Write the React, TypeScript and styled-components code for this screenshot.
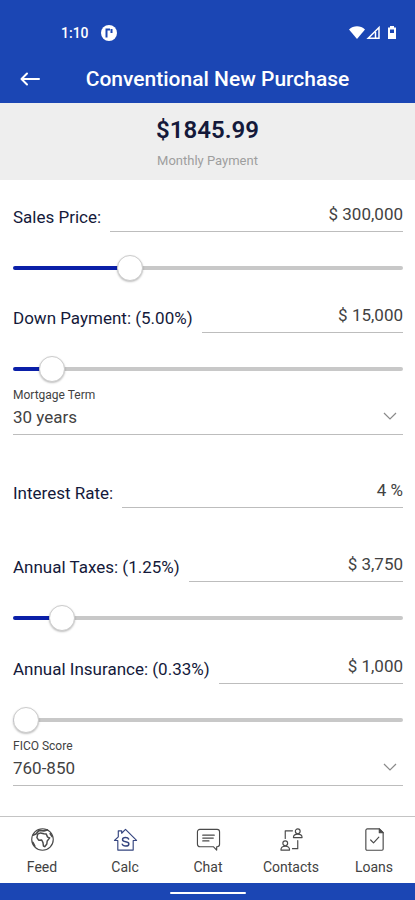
import React, { useId, useState } from "react";
import styled, { createGlobalStyle } from "styled-components";

const color = {
  brand: "#1b46b4",
  fill: "#0a1fa8",
  track: "#c8c8c8",
  line: "#bdbdbd",
  navy: "#14193a",
  text: "#424242",
  muted: "#9e9e9e",
};

const GlobalStyle = createGlobalStyle`
  *, *::before, *::after { box-sizing: border-box; }
  body {
    margin: 0;
    background: #fff;
    font-family: Roboto, "Liberation Sans", sans-serif;
  }
  button, input, select { font-family: inherit; }
`;

const Screen = styled.div`
  display: flex;
  flex-direction: column;
  min-height: 100vh;
  background: #fff;
`;

const StatusBar = styled.div`
  display: flex;
  align-items: center;
  gap: 12px;
  padding: 24px 18px 0 61px;
  height: 42px;
  color: #fff;
  font-size: 14px;
  font-weight: 500;
  line-height: 18px;
`;

const StatusIcons = styled.div`
  display: flex;
  align-items: center;
  margin-left: auto;
`;

const Header = styled.header`
  background: ${color.brand};
  color: #fff;
`;

const TitleBar = styled.div`
  display: grid;
  grid-template-columns: 48px 1fr 48px;
  align-items: center;
  height: 61px;
  padding: 12px 6px 0;
`;

const BackButton = styled.button`
  display: grid;
  place-items: center;
  height: 40px;
  padding: 0;
  border: 0;
  background: none;
  color: inherit;
  cursor: pointer;
`;

const Title = styled.h1`
  margin: 0 0 0 20px;
  font-size: 21px;
  font-weight: 500;
  line-height: 28px;
  text-align: center;
  white-space: nowrap;
`;

const Summary = styled.section`
  padding: 12px 12px 11px;
  background: #eee;
  text-align: center;
`;

const Amount = styled.div`
  color: ${color.navy};
  font-size: 24px;
  font-weight: 600;
  line-height: 30px;
`;

const AmountCaption = styled.div`
  margin-top: 8px;
  color: ${color.muted};
  font-size: 13px;
  line-height: 16px;
`;

const Form = styled.form`
  flex: 1;
  padding: 20px 12px 30px 13px;
`;

const Group = styled.div<{ $gap: number }>`
  margin-bottom: ${(p) => p.$gap}px;
`;

const FieldRow = styled.div`
  display: flex;
  align-items: center;
  gap: 9px;
  height: 32px;
`;

const FieldLabel = styled.label`
  padding-top: 2px;
  color: ${color.navy};
  font-size: 17px;
  line-height: 24px;
  white-space: nowrap;
`;

const FieldInput = styled.input`
  flex: 1;
  min-width: 0;
  height: 32px;
  padding: 0 0 4px;
  border: 0;
  border-bottom: 1px solid ${color.line};
  border-radius: 0;
  background: none;
  color: ${color.text};
  font-size: 17px;
  text-align: right;
  outline: none;
`;

const Range = styled.input`
  --size: 26px;
  display: block;
  width: 100%;
  height: 28px;
  margin: 22px 0 0;
  appearance: none;
  background: none;
  cursor: pointer;

  &::-webkit-slider-runnable-track {
    height: 4px;
    border-radius: 2px;
    background: linear-gradient(${color.fill}, ${color.fill}) no-repeat
      ${color.track};
    background-size: calc(13px + (100% - var(--size)) * var(--ratio)) 100%;
  }

  &::-webkit-slider-thumb {
    appearance: none;
    width: var(--size);
    height: var(--size);
    margin-top: -11px;
    border: 1px solid #ccc;
    border-radius: 50%;
    background: #fff;
    box-shadow: 0 1px 2px rgba(0, 0, 0, 0.25);
  }
`;

const SelectLabel = styled.label`
  display: block;
  margin-top: 5px;
  color: ${color.text};
  font-size: 12px;
  line-height: 14px;
`;

const SelectBox = styled.div`
  display: grid;
  align-items: center;
  border-bottom: 1px solid ${color.line};

  > * {
    grid-area: 1 / 1;
  }

  > svg {
    justify-self: end;
    margin: 0 6px 4px 0;
    pointer-events: none;
  }
`;

const Select = styled.select`
  width: 100%;
  height: 32px;
  padding: 0 24px 3px 0;
  border: 0;
  appearance: none;
  background: none;
  color: ${color.text};
  font-size: 17px;
  outline: none;
`;

const TabBar = styled.nav`
  position: sticky;
  bottom: 0;
  background: #fff;
`;

const Tabs = styled.div`
  display: grid;
  grid-template-columns: repeat(5, 1fr);
  height: 67px;
  border-top: 1px solid #c4c4c4;
`;

const Tab = styled.a`
  display: flex;
  flex-direction: column;
  align-items: center;
  gap: 5px;
  padding: 10px 0 0 1px;
  color: ${color.text};
  font-size: 14px;
  line-height: 20px;
  text-decoration: none;
`;

const TabIcon = styled.svg<{ $active?: boolean }>`
  width: 25px;
  height: 25px;
  fill: none;
  stroke: ${(p) => (p.$active ? "#35457f" : "#4a4a4a")};
  stroke-width: 1.2;
  stroke-linecap: round;
  stroke-linejoin: round;
`;

const HomeBar = styled.div`
  display: grid;
  place-items: center;
  height: 17px;
  padding-top: 2px;
  background: ${color.brand};
`;

const HomePill = styled.div`
  width: 76px;
  height: 2px;
  border-radius: 1px;
  background: #fff;
`;

type FieldProps = {
  label: string;
  initial: string;
  gap: number;
  range?: { min: number; max: number; value: number; step: number };
};

function Field({ label, initial, gap, range }: FieldProps) {
  const id = useId();
  const [text, setText] = useState(initial);
  const [value, setValue] = useState(range?.value ?? 0);

  return (
    <Group $gap={gap}>
      <FieldRow>
        <FieldLabel htmlFor={id}>{label}</FieldLabel>
        <FieldInput
          id={id}
          value={text}
          onChange={(e) => setText(e.target.value)}
        />
      </FieldRow>
      {range && (
        <Range
          type="range"
          aria-label={label}
          min={range.min}
          max={range.max}
          step={range.step}
          value={value}
          style={
            {
              "--ratio": (value - range.min) / (range.max - range.min),
            } as React.CSSProperties
          }
          onChange={(e) => {
            const next = Number(e.target.value);
            setValue(next);
            setText(`$ ${next.toLocaleString("en-US")}`);
          }}
        />
      )}
    </Group>
  );
}

function Picker({
  label,
  options,
  gap,
}: {
  label: string;
  options: string[];
  gap: number;
}) {
  const id = useId();
  return (
    <Group $gap={gap}>
      <SelectLabel htmlFor={id}>{label}</SelectLabel>
      <SelectBox>
        <Select id={id}>
          {options.map((o) => (
            <option key={o}>{o}</option>
          ))}
        </Select>
        <svg width="14" height="8" viewBox="0 0 14 8" fill="none">
          <path d="M1 1l6 6 6-6" stroke="#8a8a8a" strokeWidth="1.2" />
        </svg>
      </SelectBox>
    </Group>
  );
}

const tabs = [
  {
    name: "Feed",
    icon: (
      <>
        <circle cx="13" cy="13" r="11.2" />
        <path
          d="M8 7.5l3-1.300 3.500.8 2.300.2 1.500 3.300 2.200.8-2.600 3.200-.4 3.200-2.200 2.800-1.300-.6-.5-3.600-1.300-2.800-3.200.2L7.200 11z"
          strokeWidth="1.500"
        />
        <path
          d="M3 8.500l3.200-1.200L9.500 3.500l5 .5 3.500-1M21 7l2 3M3 16l2 4"
          strokeWidth="1.700"
        />
      </>
    ),
  },
  {
    name: "Calc",
    active: true,
    icon: (
      <>
        <path d="M5 14v10h16V14h3.500L13 2.500 9 6.500V4H5.500v6.300L1.500 14z" />
        <path
          d="M16.300 12.600c-.4-1-1.600-1.600-3.200-1.600-1.900 0-3.200.8-3.200 2.200 0 3.100 6.600 1.300 6.600 4.400 0 1.400-1.400 2.200-3.400 2.200-1.800 0-3.100-.7-3.500-2"
          strokeWidth="1.500"
        />
      </>
    ),
  },
  {
    name: "Chat",
    icon: (
      <>
        <path d="M4 2.500h18A2.500 2.500 0 0 1 24.500 5v13a2.500 2.500 0 0 1-2.500 2.500h-.5V24L18 20.500H4A2.500 2.500 0 0 1 1.500 18V5A2.500 2.500 0 0 1 4 2.500z" />
        <path d="M7 8.500h12M7 11.500h11M7 14.500h6.500" />
      </>
    ),
  },
  {
    name: "Contacts",
    icon: (
      <>
        <circle cx="19.500" cy="4.500" r="2.500" />
        <path d="M15 11c0-2.600 1.800-3.600 4.500-3.600s4.500 1 4.500 3.600z" />
        <circle cx="6.500" cy="17" r="2.500" />
        <path d="M2 24c0-3 1.800-4 4.500-4s4.500 1 4.500 4z" />
        <path d="M6.500 12V4H14M19.500 14v8.500H14" />
      </>
    ),
  },
  {
    name: "Loans",
    icon: (
      <>
        <path d="M5.500 2H18l4 4v17a1.200 1.200 0 0 1-1.200 1.200H5.200A1.200 1.200 0 0 1 4 23V3.500A1.500 1.500 0 0 1 5.500 2z" />
        <path d="M18 2v4h4z" fill="#4a4a4a" />
        <path d="M9 13.500l3 3 5.500-6" />
      </>
    ),
  },
];

export default function App() {
  return (
    <Screen>
      <GlobalStyle />
      <Header>
        <StatusBar>
          <span>1:10</span>
          <svg width="16" height="16" viewBox="0 0 16 16" aria-hidden="true">
            <circle cx="8" cy="8" r="8" fill="#fff" />
            <path
              d="M5.500 12.500V4.500H9M10.500 4v4"
              fill="none"
              stroke={color.brand}
              strokeWidth="2"
            />
          </svg>
          <StatusIcons>
            <svg width="48" height="16" viewBox="0 0 48 16" aria-hidden="true">
              <path d="M0 4.500C4.500.2 11.500.2 16 4.500L8 14z" fill="#fff" />
              <path
                d="M30 2.500v10.800H19.200z"
                fill="none"
                stroke="#fff"
                strokeWidth="1.500"
              />
              <path d="M26.500 7v6" stroke="#fff" strokeWidth="1.500" />
              <path
                d="M41 1h4v1.500h2V14h-8V2.500h2zM41 4.500V8h4V4.500z"
                fill="#fff"
                fillRule="evenodd"
              />
            </svg>
          </StatusIcons>
        </StatusBar>
        <TitleBar>
          <BackButton type="button" aria-label="Back">
            <svg
              width="20"
              height="14"
              viewBox="0 0 20 14"
              fill="none"
              stroke="currentColor"
              strokeWidth="2"
              strokeLinecap="round"
              strokeLinejoin="round"
            >
              <path d="M19 7H2M7 1.500 1.500 7 7 12.500" />
            </svg>
          </BackButton>
          <Title>Conventional New Purchase</Title>
        </TitleBar>
      </Header>

      <Summary>
        <Amount>$1845.99</Amount>
        <AmountCaption>Monthly Payment</AmountCaption>
      </Summary>

      <Form onSubmit={(e) => e.preventDefault()}>
        <Field
          label="Sales Price:"
          initial="$ 300,000"
          gap={19}
          range={{ min: 0, max: 1050000, value: 300000, step: 5000 }}
        />
        <Field
          label="Down Payment: (5.00%)"
          initial="$ 15,000"
          gap={5}
          range={{ min: 0, max: 210000, value: 15000, step: 1000 }}
        />
        <Picker
          label="Mortgage Term"
          options={["30 years", "20 years", "15 years"]}
          gap={41}
        />
        <Field label="Interest Rate:" initial="4 %" gap={42} />
        <Field
          label="Annual Taxes: (1.25%)"
          initial="$ 3,750"
          gap={20}
          range={{ min: 0, max: 37500, value: 3750, step: 50 }}
        />
        <Field
          label="Annual Insurance: (0.33%)"
          initial="$ 1,000"
          gap={5}
          range={{ min: 1000, max: 10000, value: 1000, step: 50 }}
        />
        <Picker
          label="FICO Score"
          options={["760-850", "700-759", "680-699"]}
          gap={0}
        />
      </Form>

      <TabBar>
        <Tabs>
          {tabs.map((t) => (
            <Tab key={t.name} href={`#${t.name.toLowerCase()}`}>
              <TabIcon viewBox="0 0 26 26" $active={t.active}>
                {t.icon}
              </TabIcon>
              {t.name}
            </Tab>
          ))}
        </Tabs>
        <HomeBar>
          <HomePill />
        </HomeBar>
      </TabBar>
    </Screen>
  );
}
